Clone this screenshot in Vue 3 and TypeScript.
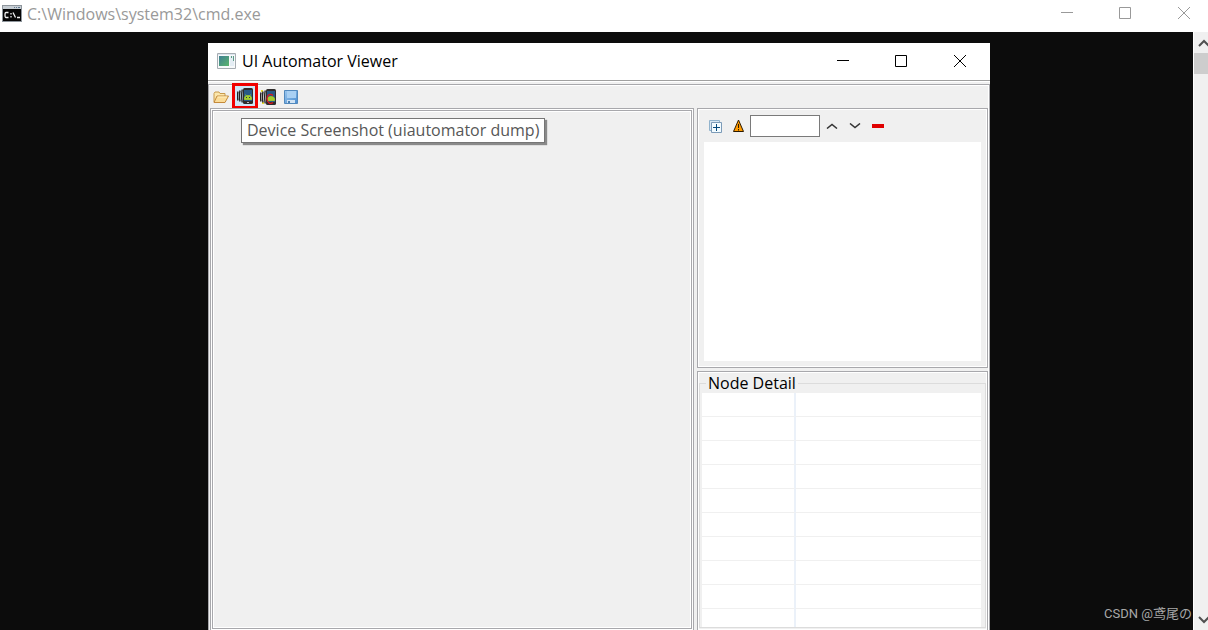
<script setup lang="ts">
import { ref } from 'vue'

const query = ref('')
const rows = Array.from({ length: 10 }, (_, i) => ({ id: i, key: '', value: '' }))
</script>

<template>
  <div class="console">
    <header class="console-title">
      <svg class="cmd-icon" width="20" height="17" viewBox="0 0 20 17">
        <rect width="20" height="17" fill="#8e959c" />
        <rect x="1" y="1" width="18" height="3" fill="#c5ccd2" />
        <path d="M12 2.500h1M14 2.500h1M16 2.500h2" stroke="#5f7890" />
        <rect x="1" y="4" width="18" height="12" fill="#050505" />
        <path d="M6.500 7.500H4Q3 7.500 3 10t1 2.500h2.500M9 8v1.500M9 11v1.500M11 7.500l2.500 5M15 12.500h3" fill="none" stroke="#f2f2f2" stroke-width="1.300" />
      </svg>
      <h1>C:\Windows\system32\cmd.exe</h1>
      <div class="controls muted">
        <button aria-label="Minimize console"><svg width="12" height="12"><path d="M0 5.500h12" /></svg></button>
        <button aria-label="Maximize console"><svg width="12" height="12"><path d="M.5.5h11v11H.5z" /></svg></button>
        <button aria-label="Close console"><svg width="12" height="12"><path d="M0 0l12 12M12 0L0 12" /></svg></button>
      </div>
    </header>

    <div class="console-body">
      <main class="terminal">
        <section class="viewer">
          <header class="viewer-title">
            <svg width="19" height="16" viewBox="0 0 19 16">
              <defs>
                <linearGradient id="pane" x2="1" y2="1">
                  <stop stop-color="#3f7f93" /><stop offset="1" stop-color="#5ab56c" />
                </linearGradient>
              </defs>
              <path d="M.5.5h18v15H.5z" fill="#f7f9fa" stroke="#a6acb2" />
              <path d="M1 1h17v1H1z" fill="#dce5ee" />
              <path d="M2 3h10v10H2z" fill="url(#pane)" />
              <path d="M13 3h4v10h-4z" fill="#e4edf4" />
              <path d="M14 3h1v2h-1zM16 3h1v5h-1z" fill="#5d9b86" />
            </svg>
            <h2>UI Automator Viewer</h2>
            <div class="controls">
              <button aria-label="Minimize"><svg width="12" height="12"><path d="M0 5.500h12" /></svg></button>
              <button aria-label="Maximize"><svg width="12" height="12"><path d="M.5.5h11v11H.5z" /></svg></button>
              <button aria-label="Close"><svg width="12" height="12"><path d="M0 0l12 12M12 0L0 12" /></svg></button>
            </div>
          </header>

          <div class="frame">
            <div class="toolbar">
              <button class="tool" aria-label="Open">
                <svg width="16" height="16" viewBox="0 0 16 16">
                  <path d="M1 13V4.500L2 3h4l1 1.500h5V7" fill="#fbe7ad" stroke="#c89a4c" />
                  <path d="M1 13.500L4 7h11.500L12 13.500z" fill="#fbdc98" stroke="#c48a3c" />
                  <path d="M4.600 8h9.500" stroke="#fff0c0" />
                </svg>
              </button>
              <button class="tool active" aria-label="Device Screenshot (uiautomator dump)">
                <svg width="16" height="16" viewBox="0 0 16 16">
                  <path d="M1 3.500Q0 8 1 12.500M3 2.500Q2 8 3 13.500M5.200 1.500Q4.200 8 5.200 14.500" fill="none" stroke="#222" stroke-width="1.400" />
                  <rect x="6" y="0" width="10" height="16" rx="1.500" fill="#302c2c" />
                  <path d="M7 2h8v11H7z" fill="#285a86" />
                  <path d="M7.500 11.500v-1.500a3.500 2.500 0 0 1 7 0v1.500zM8.500 6.500l1 1.500M13.500 6.500l-1 1.500" fill="#a3cf2c" stroke="#a3cf2c" stroke-width=".8" />
                  <path d="M9 9h1v1H9zM12 9h1v1h-1z" fill="#213b4a" />
                  <path d="M10 14h2v1h-2z" fill="#bbb" />
                </svg>
              </button>
              <button class="tool" aria-label="Device Screenshot with Compressed Hierarchy">
                <svg width="16" height="16" viewBox="0 0 16 16">
                  <path d="M1 1h2v2H1zM2 13h2v2H2z" fill="#e9dc30" />
                  <path d="M1 3.500Q0 8 1 12.500M3 2.500Q2 8 3 13.500M5.200 1.500Q4.200 8 5.200 14.500" fill="none" stroke="#222" stroke-width="1.400" />
                  <rect x="6" y="0" width="10" height="16" rx="1.500" fill="#302c2c" />
                  <path d="M7 2h8v11H7z" fill="#285a86" />
                  <path d="M7.500 11.500v-1.500a3.500 2.500 0 0 1 7 0v1.500z" fill="#a3cf2c" stroke="#a3cf2c" stroke-width=".8" />
                  <path d="M13 6.500C10 4 7 6 7 9.500s3 6.500 6 4" fill="none" stroke="#e3151b" stroke-width="1.200" />
                </svg>
              </button>
              <button class="tool" aria-label="Save">
                <svg width="16" height="16" viewBox="0 0 16 16">
                  <defs>
                    <linearGradient id="disk" x2="1" y2="1">
                      <stop stop-color="#9cc8f0" /><stop offset="1" stop-color="#4a8ccf" />
                    </linearGradient>
                  </defs>
                  <path d="M1.500 1.500h13v13h-13z" fill="url(#disk)" stroke="#5289bd" />
                  <path d="M4 2h9v7H4z" fill="#a9d0f3" />
                  <path d="M4 11h8v3H4z" fill="#cfe3f5" />
                  <path d="M5 12h2v2H5z" fill="#4b80b3" />
                </svg>
              </button>
            </div>

            <div class="split">
              <div class="shot-outer">
                <div class="shot"></div>
                <div class="tooltip" role="tooltip">Device Screenshot (uiautomator dump)</div>
              </div>

              <div class="side">
                <section class="tree-panel">
                  <div class="tree-tools">
                    <button class="mini" aria-label="Expand All">
                      <svg width="13" height="13" viewBox="0 0 13 13">
                        <path d="M.5.5h10v10H.5z" fill="#d7e7f3" stroke="#91b3cd" />
                        <path d="M2.500 2.500h10v10h-10z" fill="#f2fbff" stroke="#7c9bb8" />
                        <path d="M4 7.500h7M7.500 4v7" stroke="#064a7d" />
                      </svg>
                    </button>
                    <button class="mini" aria-label="Toggle NAF Nodes">
                      <svg width="11" height="14" viewBox="0 0 11 14">
                        <path d="M5.500 1L10.500 12.500H.5z" fill="#ff9a00" stroke="#2b1a00" />
                        <path d="M5.500 5v4M5.500 10v1.500" stroke="#2b1a00" />
                      </svg>
                    </button>
                    <input v-model="query" type="text" aria-label="Search" />
                    <button class="mini arrow" aria-label="Previous">
                      <svg width="12" height="6" viewBox="0 0 12 6"><path d="M1 5.500l5-4 5 4" /></svg>
                    </button>
                    <button class="mini arrow" aria-label="Next">
                      <svg width="12" height="6" viewBox="0 0 12 6"><path d="M1 .5l5 4 5-4" /></svg>
                    </button>
                    <button class="mini" aria-label="Delete">
                      <svg width="12" height="4" viewBox="0 0 12 4"><path d="M0 0h12v4H0z" fill="#e00000" /></svg>
                    </button>
                  </div>
                  <div class="tree"></div>
                </section>

                <section class="detail-panel">
                  <fieldset>
                    <legend>Node Detail</legend>
                    <table aria-label="Node Detail">
                      <colgroup><col class="key" /><col /></colgroup>
                      <tbody>
                        <tr v-for="row in rows" :key="row.id">
                          <td>{{ row.key }}</td>
                          <td>{{ row.value }}</td>
                        </tr>
                      </tbody>
                    </table>
                  </fieldset>
                </section>
              </div>
            </div>
          </div>
        </section>
        <p class="watermark">CSDN @鸢尾の</p>
      </main>

      <div class="scrollbar">
        <button aria-label="Scroll up"><svg width="12" height="8" viewBox="0 0 12 8"><path d="M1 7l5-5 5 5" /></svg></button>
        <div class="thumb"></div>
        <button class="down" aria-label="Scroll down"><svg width="12" height="8" viewBox="0 0 12 8"><path d="M1 1l5 5 5-5" /></svg></button>
      </div>
    </div>
  </div>
</template>

<style>
body {
  margin: 0;
  overflow: hidden;
}
</style>

<style scoped>
* {
  box-sizing: border-box;
}
.console {
  height: 100vh;
  display: flex;
  flex-direction: column;
  font-family: "Open Sans", "Noto Sans", "Noto Sans CJK SC", sans-serif;
  font-size: 16px;
  background: #fff;
  overflow: hidden;
}
button {
  padding: 0;
  border: 0;
  background: none;
  display: flex;
  align-items: center;
  justify-content: center;
}
svg {
  display: block;
  flex: none;
}
h1,
h2 {
  margin: 0;
  flex: 1;
  font-size: 16px;
  font-weight: 400;
  line-height: 24px;
}
.console-title {
  height: 32px;
  flex: none;
  display: flex;
  align-items: flex-start;
  padding: 2px 0 0 2px;
}
.console-title h1 {
  color: #999;
  margin-left: 5px;
}
.cmd-icon {
  margin-top: 3px;
}
.controls {
  display: flex;
}
.controls button {
  width: 58px;
  height: 22px;
}
.controls button:last-child {
  width: 60px;
}
.controls path {
  fill: none;
  stroke: #000;
}
.muted path {
  stroke: #999;
}
.muted {
  margin-right: -6px;
}
.console-body {
  flex: 1;
  min-height: 0;
  display: flex;
}
.terminal {
  flex: 1;
  min-width: 0;
  position: relative;
  display: flex;
  background: #0c0c0c;
  padding: 11px 203px 0 208px;
}
.viewer {
  flex: 1;
  min-width: 0;
  display: flex;
  flex-direction: column;
  background: #fff;
}
.viewer-title {
  height: 38px;
  flex: none;
  display: flex;
  align-items: center;
  padding: 0 0 1px 9px;
  border-bottom: 1px solid #a0a0a0;
}
.viewer-title h2 {
  margin-left: 6px;
}
.frame {
  flex: 1;
  min-height: 0;
  margin-top: 3px;
  display: flex;
  flex-direction: column;
  background: #f0f0f0;
  border: 1px solid #a8a8ac;
  border-bottom: 0;
  box-shadow: inset 0 1px #fff, inset -1px 0 #fff, 0 -2px #f0f0f0;
}
.toolbar {
  display: flex;
  height: 23px;
}
.tool {
  width: 23px;
  height: 24px;
}
.active {
  width: 26px;
  height: 26px;
  margin: -2px -2px 0 0;
  border: 3px solid #f00000;
  background: #cde6f7;
}
.split {
  flex: 1;
  min-height: 0;
  display: grid;
  grid-template-columns: 484fr 291fr;
  gap: 3px;
  padding: 0 1px;
}
.shot-outer {
  position: relative;
  min-width: 0;
  padding: 1px;
  border: 1px solid #a8a8ac;
  border-bottom: 0;
  background: #fff;
}
.shot {
  height: 100%;
  background: #f0f0f0;
  border: 1px solid #a8a8ac;
  box-shadow: inset 1px 1px #fff, inset -1px -1px #fff;
}
.tooltip {
  position: absolute;
  left: 30px;
  top: 9px;
  padding: 0 5px;
  line-height: 23px;
  white-space: nowrap;
  color: #575757;
  background: #fff;
  border: 1px solid #767676;
  box-shadow: 2px 2px 1px #8a8a8a;
}
.side {
  min-width: 0;
  min-height: 0;
  display: grid;
  grid-template-rows: minmax(0, 260fr) minmax(0, 259fr);
  gap: 3px;
}
.tree-panel,
.detail-panel {
  min-width: 0;
  border: 1px solid #a8a8ac;
  box-shadow: inset 1px 1px #fff, inset -1px -1px #fff;
}
.tree-panel {
  padding: 6px;
  display: flex;
  flex-direction: column;
}
.tree-tools {
  display: flex;
  align-items: center;
  height: 22px;
  margin-bottom: 5px;
}
.mini {
  width: 23px;
  height: 22px;
}
.arrow path {
  fill: none;
  stroke: #333;
  stroke-width: 1.5;
}
input {
  width: 70px;
  height: 22px;
  padding: 0 4px;
  border: 1px solid #7a7a7a;
  border-radius: 0;
  background: #fff;
  font: inherit;
}
.tree {
  flex: 1;
  background: #fff;
}
.detail-panel {
  min-height: 0;
  padding: 1px 1px 2px;
  border-bottom: 0;
}
fieldset {
  height: 100%;
  min-width: 0;
  margin: 0;
  padding: 0 4px 0 2px;
  border: 1px solid #dcdcdc;
}
legend {
  margin-left: 4px;
  padding: 0 2px;
  line-height: 20px;
}
table {
  width: 100%;
  table-layout: fixed;
  border-collapse: separate;
  border-spacing: 0;
  background: #fff;
}
.key {
  width: 94px;
}
td {
  height: 24px;
  padding: 0;
  border-bottom: 1px solid #f0f0f0;
}
td:first-child {
  border-right: 2px solid #ebf1f9;
}
tr:last-child td {
  height: 18px;
  border-bottom: 0;
}
.watermark {
  position: absolute;
  right: 1px;
  bottom: 6px;
  margin: 0;
  font: 13px/20px Roboto, "Noto Sans CJK SC", sans-serif;
  color: #a8a8a8;
}
.scrollbar {
  width: 15px;
  flex: none;
  display: flex;
  flex-direction: column;
  overflow: hidden;
  border-left: 1px solid #fff;
  background: #f0f0f0;
}
.scrollbar button {
  height: 21px;
  width: 20px;
}
.scrollbar path {
  fill: none;
  stroke: #505050;
  stroke-width: 2;
}
.thumb {
  height: 21px;
  background: #cdcdcd;
}
.scrollbar .down {
  margin-top: auto;
}
</style>
